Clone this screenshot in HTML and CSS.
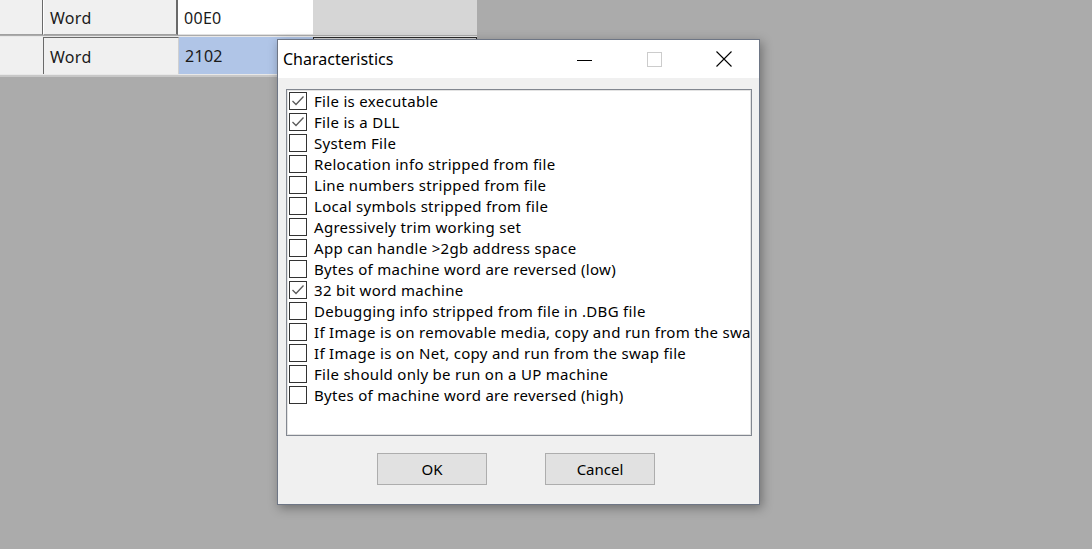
FILE: index.html
```html
<!DOCTYPE html>
<html>
<head>
<meta charset="utf-8">
<link rel="stylesheet" href="styles.css">
</head>
<body>
<div class="grid">
  <div class="row r1">
    <div class="c c0"></div>
    <div class="c c1">Word</div>
    <div class="c c2">00E0</div>
    <div class="c c3"></div>
  </div>
  <div class="row r2">
    <div class="c c0"></div>
    <div class="c c1">Word</div>
    <div class="c c2 sel">2102</div>
    <div class="c c3"></div>
  </div>
</div>

<div class="dialog">
  <div class="titlebar">
    <span class="title">Characteristics</span>
    <div class="caps">
      <span class="cap"><svg width="15" height="15" viewBox="0 0 15 15"><line x1="0" y1="8.5" x2="15" y2="8.5" stroke="#000" stroke-width="1"/></svg></span>
      <span class="cap"><svg width="15" height="15" viewBox="0 0 15 15"><rect x="0.5" y="0.5" width="14" height="14" fill="none" stroke="#cccccc" stroke-width="1"/></svg></span>
      <span class="cap"><svg width="16" height="16" viewBox="0 0 16 16"><path d="M0.5 0.5 L15.5 15.5 M15.5 0.5 L0.5 15.5" stroke="#000" stroke-width="1.1" fill="none"/></svg></span>
    </div>
  </div>
  <div class="body">
    <div class="list">
      <div class="item"><span class="box on"><svg width="16" height="16" viewBox="0 0 16 16"><path d="M2.5 8 L6 11.5 L13.5 3.5" stroke="#5a5a5a" stroke-width="1.3" fill="none"/></svg></span><span class="lbl">File is executable</span></div>
      <div class="item"><span class="box on"><svg width="16" height="16" viewBox="0 0 16 16"><path d="M2.5 8 L6 11.5 L13.5 3.5" stroke="#5a5a5a" stroke-width="1.3" fill="none"/></svg></span><span class="lbl">File is a DLL</span></div>
      <div class="item"><span class="box"></span><span class="lbl">System File</span></div>
      <div class="item"><span class="box"></span><span class="lbl">Relocation info stripped from file</span></div>
      <div class="item"><span class="box"></span><span class="lbl">Line numbers stripped from file</span></div>
      <div class="item"><span class="box"></span><span class="lbl">Local symbols stripped from file</span></div>
      <div class="item"><span class="box"></span><span class="lbl">Agressively trim working set</span></div>
      <div class="item"><span class="box"></span><span class="lbl">App can handle &gt;2gb address space</span></div>
      <div class="item"><span class="box"></span><span class="lbl">Bytes of machine word are reversed (low)</span></div>
      <div class="item"><span class="box on"><svg width="16" height="16" viewBox="0 0 16 16"><path d="M2.5 8 L6 11.5 L13.5 3.5" stroke="#5a5a5a" stroke-width="1.3" fill="none"/></svg></span><span class="lbl">32 bit word machine</span></div>
      <div class="item"><span class="box"></span><span class="lbl">Debugging info stripped from file in .DBG file</span></div>
      <div class="item"><span class="box"></span><span class="lbl">If Image is on removable media, copy and run from the swap file</span></div>
      <div class="item"><span class="box"></span><span class="lbl">If Image is on Net, copy and run from the swap file</span></div>
      <div class="item"><span class="box"></span><span class="lbl">File should only be run on a UP machine</span></div>
      <div class="item"><span class="box"></span><span class="lbl">Bytes of machine word are reversed (high)</span></div>
    </div>
    <div class="buttons">
      <button class="btn">OK</button>
      <button class="btn">Cancel</button>
    </div>
  </div>
</div>
</body>
</html>
```
FILE: styles.css
```css
html, body {
  margin: 0;
  padding: 0;
}
body {
  background: #ababab;
  width: 1092px;
  height: 549px;
  overflow: hidden;
  position: relative;
  font-family: "Noto Sans", "Open Sans", sans-serif;
  color: #000;
}
.grid {
  width: 477px;
  display: flex;
  flex-direction: column;
}
.row {
  display: flex;
}
.c {
  box-sizing: border-box;
  font-size: 16px;
  letter-spacing: 0.3px;
  display: flex;
  align-items: center;
  padding-left: 6px;
  padding-top: 1px;
  color: #1a1a1a;
}
.r1 {
  height: 35px;
  background: #e6e6e6;
}
.r1 .c { height: 35px; }
.r1 .c0 {
  width: 43px;
  background: #f0f0f0;
  border-right: 1px solid #6a6a6a;
  border-bottom: 1px solid #a0a0a0;
}
.r1 .c1 {
  width: 135px;
  background: #f0f0f0;
  border-left: 1px solid #fff;
  border-right: 2px solid #6a6a6a;
  border-bottom: 1px solid #a0a0a0;
}
.r1 .c2 {
  width: 135px;
  background: #fff;
  border-bottom: 1px solid #e0e0e0;
}
.r1 .c3 {
  width: 164px;
  background: #d6d6d6;
}
.r2 {
  height: 38px;
  padding-top: 1px;
  background: #e8e8e8;
  border-bottom: 2px solid #c8c8c8;
  box-sizing: content-box;
  margin-top: 1px;
}
.r2 .c { height: 37px; }
.r2 .c0 {
  width: 44px;
  background: #f0f0f0;
  border-right: 1px solid #6a6a6a;
}
.r2 .c1 {
  width: 135px;
  background: #f0f0f0;
  border-top: 1px solid #6a6a6a;
  border-right: 1px solid #d0d0d0;
}
.r2 .c2.sel {
  width: 134px;
  background: #b0c5e7;
}
.r2 .c3 {
  width: 164px;
  background: #d2d2d2;
  border-top: 1px solid #2a2a2a;
  border-left: 1px solid #2a2a2a;
  border-right: 1px solid #2a2a2a;
}

.dialog {
  position: absolute;
  left: 277px;
  top: 39px;
  width: 483px;
  height: 466px;
  box-sizing: border-box;
  border: 1px solid #6e7685;
  background: #f0f0f0;
  box-shadow: 2px 3px 10px rgba(0, 0, 0, 0.35);
  display: flex;
  flex-direction: column;
}
.titlebar {
  height: 38px;
  background: #fff;
  display: flex;
  align-items: center;
  justify-content: space-between;
}
.title {
  padding-left: 5px;
  font-size: 16px;
  color: #000;
}
.caps {
  display: flex;
  height: 38px;
}
.cap {
  width: 70px;
  display: flex;
  align-items: center;
  justify-content: center;
}
.cap svg { display: block; }
.body {
  flex: 1;
  display: flex;
  flex-direction: column;
  padding: 11px 7px 0 8px;
}
.list {
  height: 347px;
  box-sizing: border-box;
  background: #fff;
  border: 1px solid #828790;
  box-shadow: inset 0 0 0 1px #e3e3e3;
  padding: 0 0 0 2px;
  overflow: hidden;
  display: flex;
  flex-direction: column;
}
.item {
  height: 21px;
  flex: none;
  display: flex;
  align-items: center;
  white-space: nowrap;
  font-size: 15px;
  letter-spacing: 0.3px;
}
.box {
  width: 18px;
  height: 18px;
  box-sizing: border-box;
  border: 1px solid #333;
  background: #fff;
  margin-right: 7px;
  flex: none;
  display: flex;
  align-items: center;
  justify-content: center;
}
.box svg { display: block; }
.lbl {
  color: #000;
}
.buttons {
  display: flex;
  gap: 58px;
  padding-top: 17px;
  padding-left: 91px;
}
.btn {
  width: 110px;
  height: 32px;
  box-sizing: border-box;
  background: #e1e1e1;
  border: 1px solid #adadad;
  font-family: "Noto Sans", "Open Sans", sans-serif;
  font-size: 15px;
  color: #000;
  padding: 0;
}
```
